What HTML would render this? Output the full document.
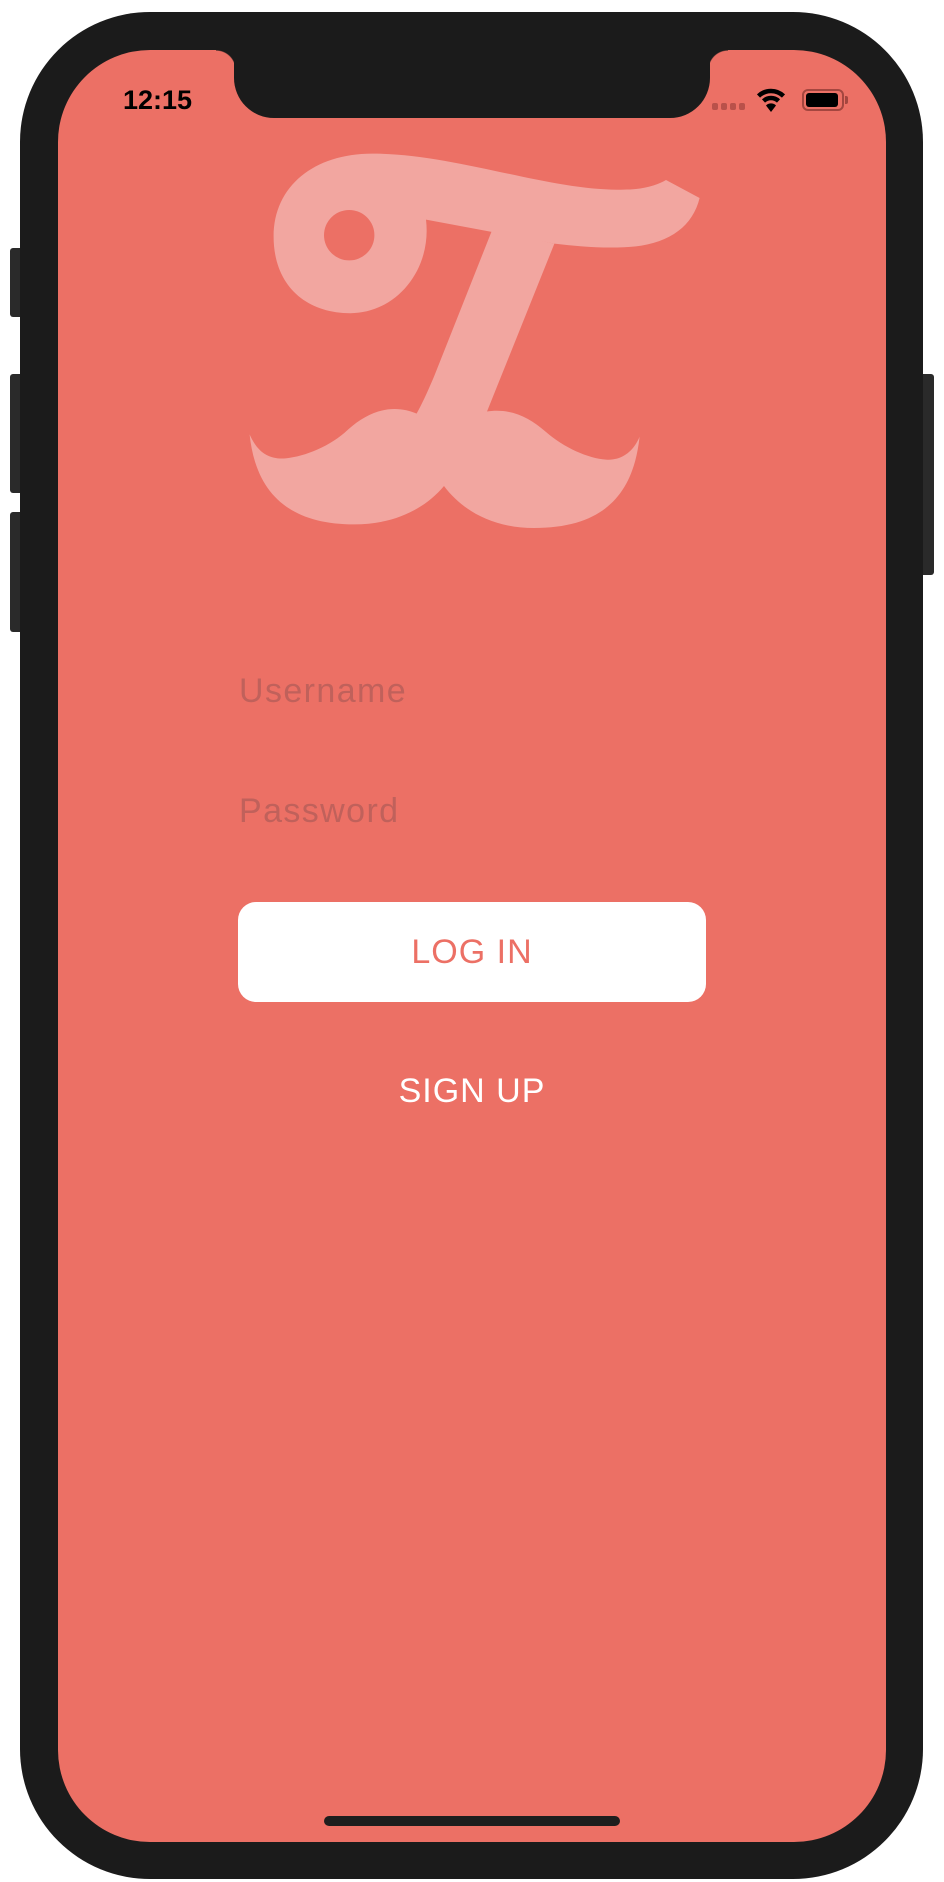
<!DOCTYPE html>
<html><head><meta charset="utf-8"><style>
html,body{margin:0;padding:0;background:#fff;width:944px;height:1882px;overflow:hidden;font-family:"Liberation Sans",sans-serif;}
.abs{position:absolute}
.t{position:absolute;white-space:nowrap;line-height:1}
</style></head><body>
<div class="abs" style="left:10px;top:248px;width:14px;height:69px;background:#2a2a2a;border-radius:3px"></div>
<div class="abs" style="left:10px;top:374px;width:14px;height:119px;background:#2a2a2a;border-radius:3px"></div>
<div class="abs" style="left:10px;top:512px;width:14px;height:120px;background:#2a2a2a;border-radius:3px"></div>
<div class="abs" style="left:918px;top:374px;width:16px;height:201px;background:#2a2a2a;border-radius:3px"></div>
<div class="abs" style="left:20px;top:12px;width:903px;height:1867px;background:#1b1b1b;border-radius:130px"></div>
<div class="abs" style="left:58px;top:50px;width:828px;height:1792px;background:#ec7065;border-radius:92px;overflow:hidden">
  <div class="abs" style="left:176px;top:-2px;width:476px;height:70px;background:#1b1b1b;border-radius:0 0 40px 40px"></div>
  <div class="abs" style="left:158px;top:0;width:20px;height:20px;background:radial-gradient(circle at 0 20px,transparent 19px,#1b1b1b 20px)"></div>
  <div class="abs" style="left:650px;top:0;width:20px;height:20px;background:radial-gradient(circle at 20px 20px,transparent 19px,#1b1b1b 20px)"></div>
</div>
<div class="t" style="left:123px;top:87px;font-size:27px;font-weight:bold;color:#000">12:15</div>
<div class="abs" style="left:712px;top:103px;width:6px;height:7px;background:#b9514a;border-radius:2px"></div>
<div class="abs" style="left:721px;top:103px;width:6px;height:7px;background:#b9514a;border-radius:2px"></div>
<div class="abs" style="left:730px;top:103px;width:6px;height:7px;background:#b9514a;border-radius:2px"></div>
<div class="abs" style="left:739px;top:103px;width:6px;height:7px;background:#b9514a;border-radius:2px"></div>
<svg class="abs" style="left:756px;top:86px" width="30" height="28" viewBox="0 0 30 28">
<path d="M2.5 10 A18 18 0 0 1 27.5 10" stroke="#000" stroke-width="4.5" fill="none"/>
<path d="M7.5 15 A11 11 0 0 1 22.5 15" stroke="#000" stroke-width="4.5" fill="none"/>
<path d="M15 26 L10 19.5 A7 7 0 0 1 20 19.5 Z" fill="#000"/></svg>
<div class="abs" style="left:802px;top:89px;width:42px;height:22px;border:2px solid #a4463f;border-radius:6px;box-sizing:border-box"></div>
<div class="abs" style="left:806px;top:93px;width:32px;height:14px;background:#000;border-radius:3px"></div>
<div class="abs" style="left:845px;top:96px;width:3px;height:8px;background:#a4463f;border-radius:0 2px 2px 0"></div>
<svg class="abs" style="left:0;top:0" width="944" height="600" viewBox="0 0 944 600">
<g transform="scale(1.2)" fill="#f2a6a0">
<path d="M292,261 C255,261 228,238 228,197 C228,155 262,128 310,128 C380,128 460,160 520,158 C537,158 548,154 555,150 L583,165 C577,190 555,205 520,206 C500,207 480,205 462,203 L355,183 C360,225 330,261 292,261 Z"/>
<path d="M410,192 L462,203 L405,345 L347,345 C352,336 357,325 362,313 Z"/>
<path d="M208,362 C215,378 225,383 238,382 C255,380 275,372 290,358 C310,340 330,337 348,345 L405,343 C425,340 440,347 455,360 C470,373 490,382 505,383 C518,384 528,376 533,364 C528,410 505,440 445,440 C410,440 385,425 370,405 C355,423 330,437 295,437 C240,437 213,410 208,362 Z"/>
<ellipse cx="291" cy="196" rx="21" ry="21" fill="#ec7065"/>
</g></svg>
<div class="t" style="left:239px;top:674px;font-size:34px;letter-spacing:1.4px;color:#c0615b">Username</div>
<div class="t" style="left:239px;top:794px;font-size:34px;letter-spacing:1.4px;color:#c0615b">Password</div>
<div class="abs" style="left:238px;top:902px;width:468px;height:100px;background:#fff;border-radius:18px"></div>
<div class="t" style="left:238px;width:468px;text-align:center;top:935px;font-size:34px;letter-spacing:1px;color:#ec7065">LOG IN</div>
<div class="t" style="left:238px;width:468px;text-align:center;top:1074px;font-size:34px;letter-spacing:1px;color:#fff">SIGN UP</div>
<div class="abs" style="left:324px;top:1816px;width:296px;height:10px;background:#1e1e1e;border-radius:5px"></div>
</body></html>
